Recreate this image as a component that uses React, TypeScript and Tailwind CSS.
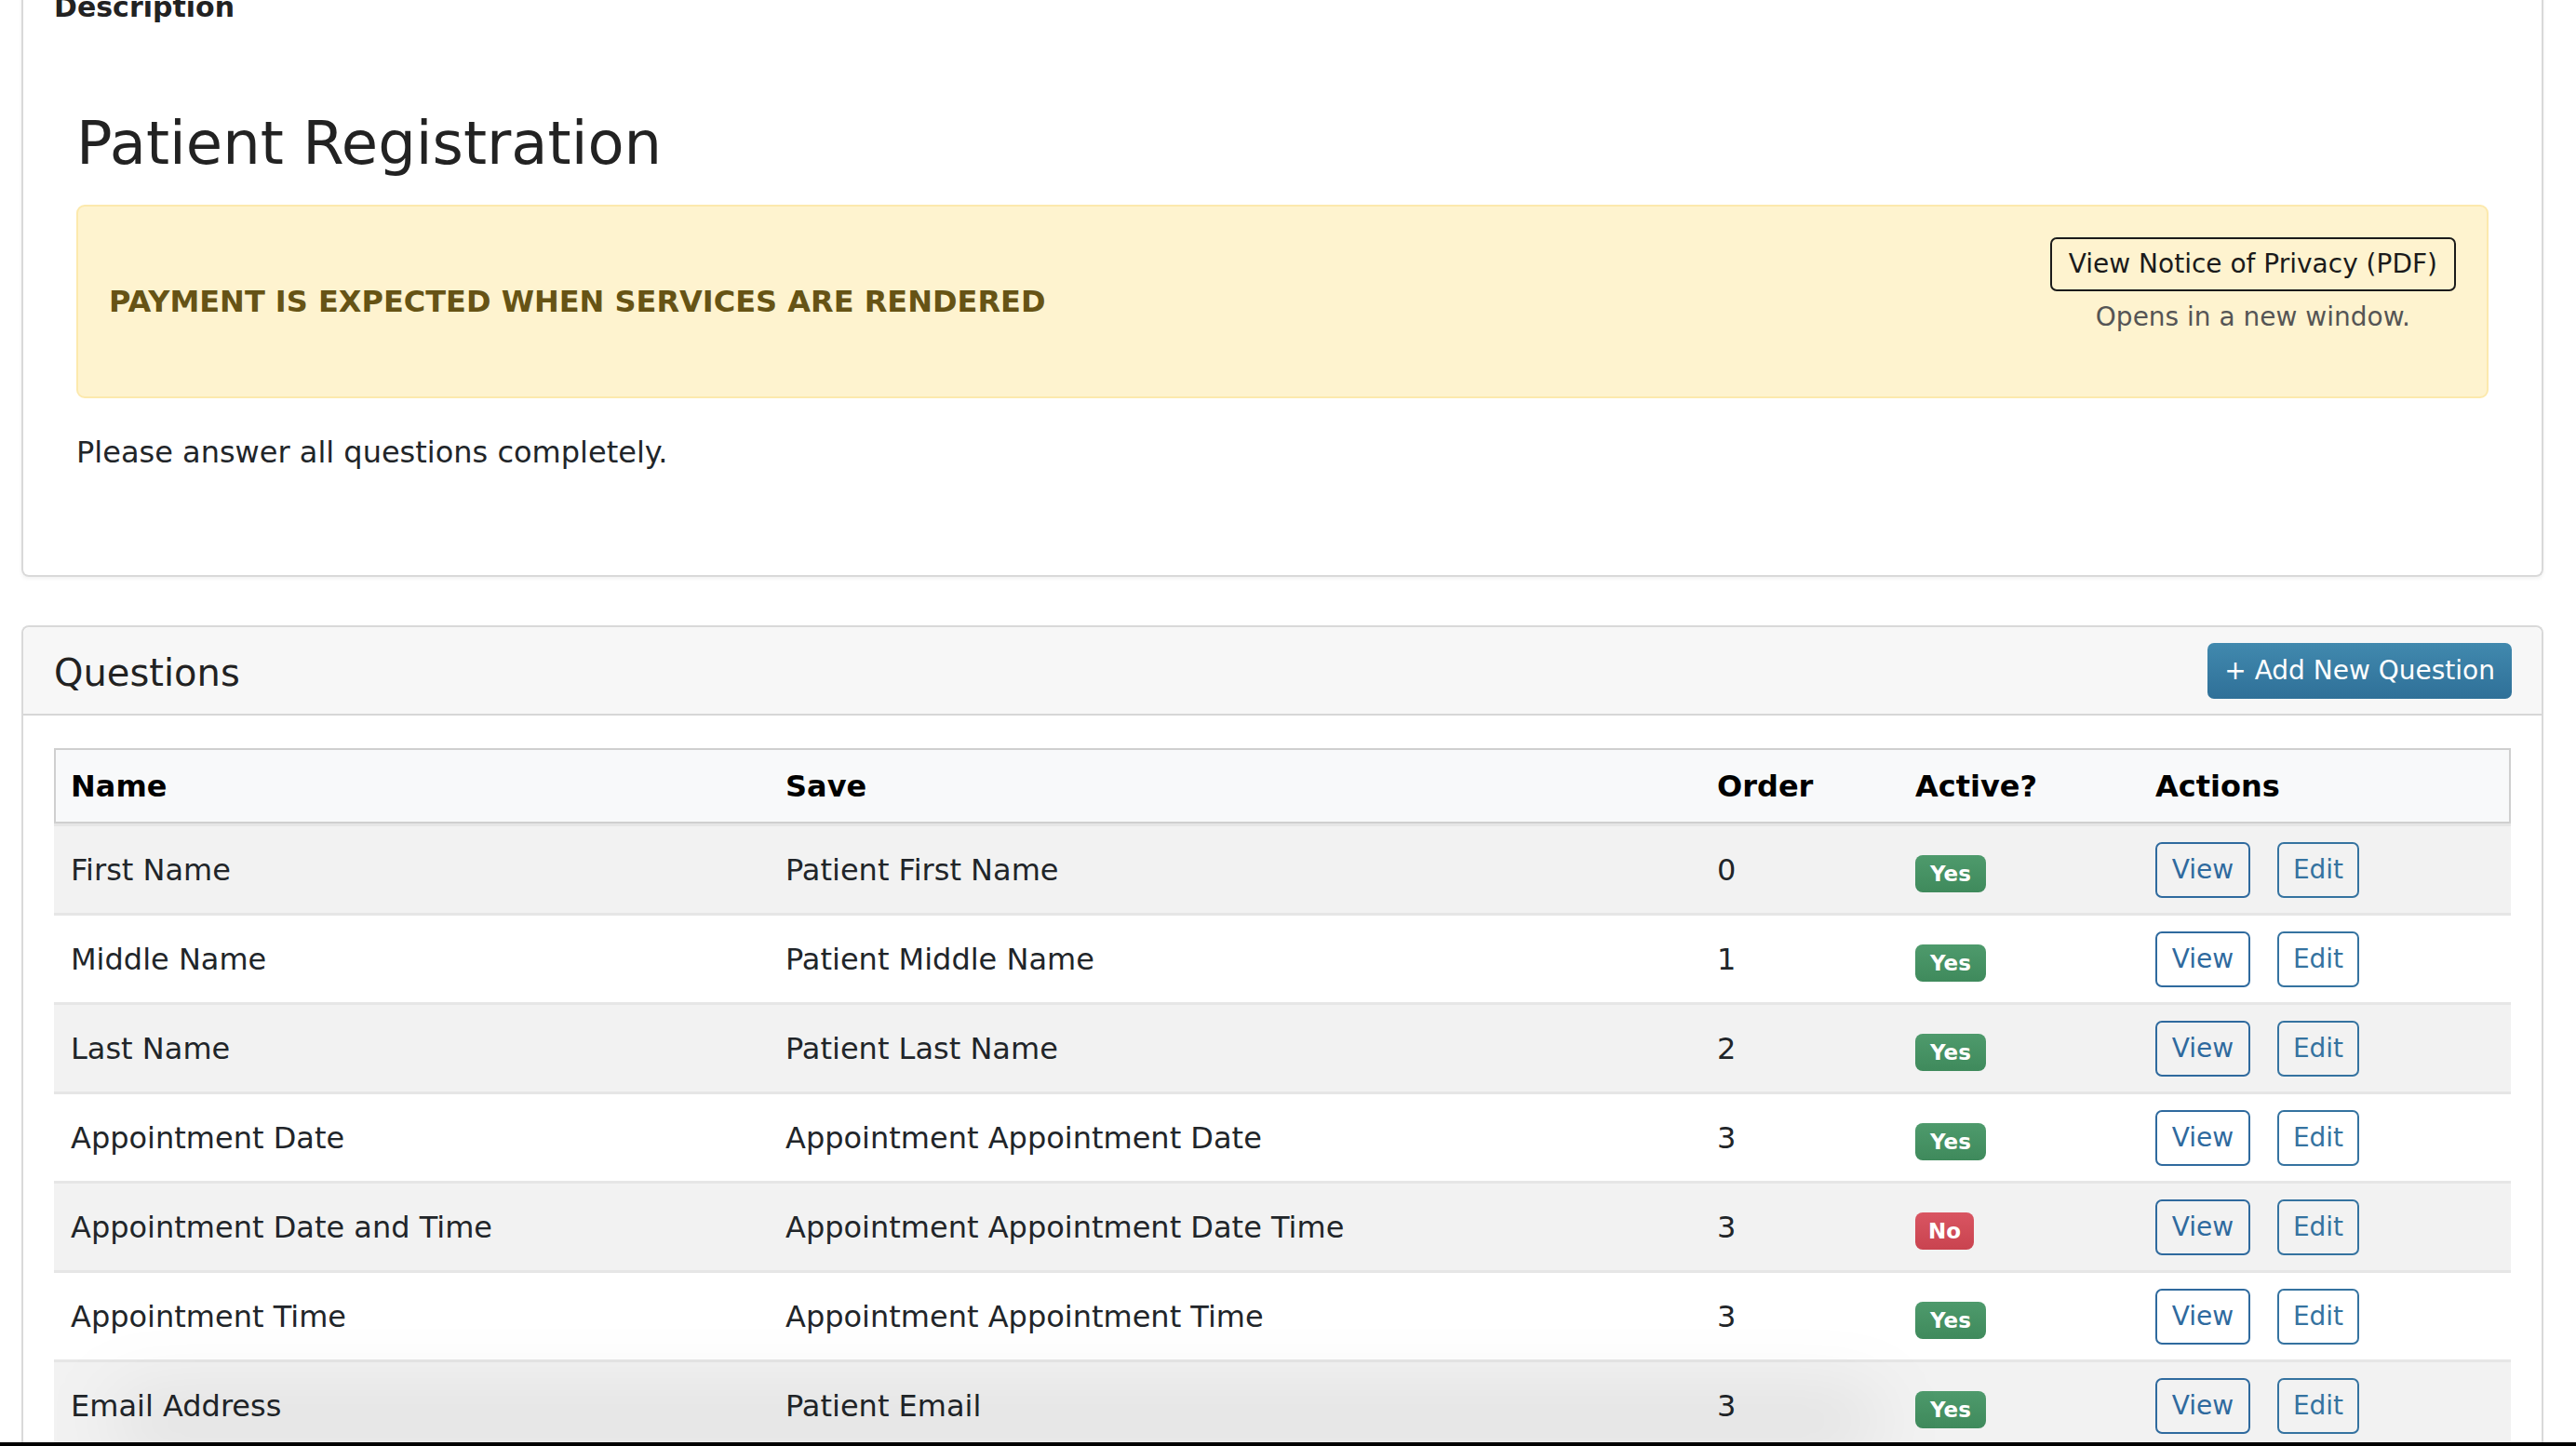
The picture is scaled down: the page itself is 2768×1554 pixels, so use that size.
import React from 'react'

type Question = {
  name: string
  save: string
  order: number
  active: boolean
}

const questions: Question[] = [
  { name: "First Name", save: "Patient First Name", order: 0, active: true },
  { name: "Middle Name", save: "Patient Middle Name", order: 1, active: true },
  { name: "Last Name", save: "Patient Last Name", order: 2, active: true },
  { name: "Appointment Date", save: "Appointment Appointment Date", order: 3, active: true },
  { name: "Appointment Date and Time", save: "Appointment Appointment Date Time", order: 3, active: false },
  { name: "Appointment Time", save: "Appointment Appointment Time", order: 3, active: true },
  { name: "Email Address", save: "Patient Email", order: 3, active: true },
]

const cols = "grid grid-cols-[768px_1001px_213px_258px_1fr]"

function Badge({ active }: { active: boolean }) {
  return active ? (
    <span className="inline-flex h-[40px] items-center rounded-[8px] bg-gradient-to-b from-[#4e9a6c] to-[#3f8a5c] px-[16px] text-[23px] font-bold text-white">Yes</span>
  ) : (
    <span className="inline-flex h-[40px] items-center rounded-[8px] bg-gradient-to-b from-[#d95562] to-[#c9434f] px-[14px] text-[23px] font-bold text-white">No</span>
  )
}

function QuestionRow({ q, index }: { q: Question; index: number }) {
  return (
    <div className={`${cols} h-[96px] items-center border-t-[3px] border-[#e6e6e6] ${index % 2 === 0 ? "bg-[#f2f2f2]" : "bg-white"}`}>
      <div className="pl-[18px]">{q.name}</div>
      <div className="pl-[18px]">{q.save}</div>
      <div className="pl-[18px]">{q.order}</div>
      <div className="pl-[18px] pt-[2px]"><Badge active={q.active} /></div>
      <div className="flex gap-[29px] pl-[18px]">
        <button className="h-[60px] w-[102px] rounded-[7px] border-2 border-[#2f6a9e] text-[28px] text-[#2f6a9e]">View</button>
        <button className="h-[60px] w-[88px] rounded-[7px] border-2 border-[#3573a0] text-[28px] text-[#3573a0]">Edit</button>
      </div>
    </div>
  )
}

export default function App() {
  return (
    <div className="relative h-[1554px] w-full overflow-hidden bg-white font-['DejaVu_Sans','Liberation_Sans',sans-serif] text-[32px] text-[#212529]">
      {/* description card, top cut off */}
      <section className="ml-[23px] w-[2710px] rounded-b-[8px] border-x-2 border-b-2 border-[#d9d9d9] px-[33px] pb-[108px] shadow-[0_2px_4px_rgba(0,0,0,0.06)]">
        <div className="-mt-[10px] text-[30px] font-bold leading-[36px] text-[#222]">Description</div>
        <div className="px-[24px]">
          <h1 className="mt-[90px] text-[64px] leading-[76px] text-[#222]">Patient Registration</h1>
          <div className="mt-[28px] flex h-[208px] justify-between rounded-[9px] border-2 border-[#fce9ad] bg-[#fef3cf] px-[33px] py-[33px]">
            <div className="self-center text-[32px] font-bold text-[#665315]">PAYMENT IS EXPECTED WHEN SERVICES ARE RENDERED</div>
            <div className="flex flex-col items-center self-start">
              <button className="h-[58px] rounded-[7px] border-2 border-[#1b1b1b] px-[18px] text-[28px] text-[#1b1b1b]">View Notice of Privacy (PDF)</button>
              <div className="mt-[8px] text-[28px] leading-[39px] text-[#555]">Opens in a new window.</div>
            </div>
          </div>
          <p className="mt-[34px] leading-[48px]">Please answer all questions completely.</p>
        </div>
      </section>

      {/* questions card */}
      <section className="ml-[23px] mt-[52px] w-[2710px] rounded-t-[8px] border-x-2 border-t-2 border-[#d9d9d9]">
        <div className="flex h-[95px] items-center justify-between rounded-t-[8px] border-b-2 border-[#d6d6d6] bg-[#f7f7f7] pl-[33px] pr-[32px]">
          <h2 className="pt-[4px] text-[40px] text-[#222]">Questions</h2>
          <button className="h-[60px] rounded-[7px] bg-gradient-to-b from-[#4189ae] to-[#2f7098] px-[18px] text-[28px] text-white">+ Add New Question</button>
        </div>
        <div className="px-[33px] pt-[35px]">
          <div className={`${cols} h-[81px] items-center border-2 border-[#cfcfcf] bg-[#f8f9fa] font-bold text-black`}>
            <div className="pl-[16px]">Name</div>
            <div className="pl-[16px]">Save</div>
            <div className="pl-[16px]">Order</div>
            <div className="pl-[16px]">Active?</div>
            <div className="pl-[16px]">Actions</div>
          </div>
          {questions.map((q, i) => (
            <QuestionRow key={q.name} q={q} index={i} />
          ))}
        </div>
      </section>

      <div className="absolute bottom-[4px] left-[120px] h-[46px] w-[1900px] rounded-full bg-black/10 blur-2xl" />
      <div className="absolute bottom-0 left-0 h-[4px] w-full bg-black" />
    </div>
  )
}
